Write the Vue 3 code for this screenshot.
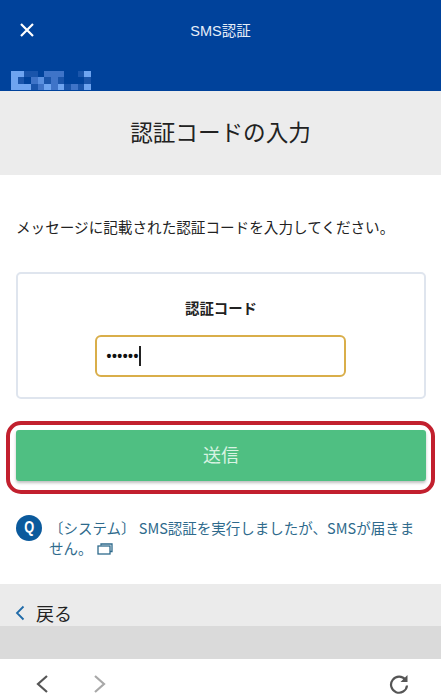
<script setup>
// pixelated account name in the header, 12 x 3 cells
const L = '#6ea4f0'
const M = '#3f74c8'
const D = '#1a55ab'
const B = '#00429b'
const mosaic = [
  L, L, D, D, B, M, M, M, B, B, D, L,
  L, D, B, M, '#5a90e0', D, M, D, B, B, B, D,
  L, L, L, D, M, L, M, L, D, M, D, L,
]
</script>

<template>
  <div class="page">
    <header class="top">
      <div class="top-row">
        <svg class="close" width="16" height="16" viewBox="0 0 16 16">
          <path d="M2 2 14 14M14 2 2 14" stroke="#fff" stroke-width="2.2" fill="none" />
        </svg>
        <span class="top-title">SMS認証</span>
      </div>
      <div class="mosaic">
        <i v-for="(c, i) in mosaic" :key="i" :style="{ background: c }"></i>
      </div>
    </header>

    <div class="title-band">
      <h1>認証コードの入力</h1>
    </div>

    <main class="content">
      <p class="lead">メッセージに記載された認証コードを入力してください。</p>

      <section class="card">
        <div class="label">認証コード</div>
        <div class="input">
          <span class="dots">••••••</span><span class="caret"></span>
        </div>
      </section>

      <div class="highlight">
        <button class="send">送信</button>
      </div>

      <div class="faq">
        <span class="q"><b>Q</b></span>
        <p>〔システム〕 SMS認証を実行しましたが、SMSが届きません。<svg class="ext" width="16" height="12" viewBox="0 0 16 12">
            <path d="M4 2.5V1h11v7.5h-2" fill="none" stroke="#2e6a8c" stroke-width="1.3" />
            <rect x="1" y="3" width="12" height="8" fill="none" stroke="#2e6a8c" stroke-width="1.3" />
          </svg>
        </p>
      </div>
    </main>

    <div class="back-band">
      <svg width="10" height="16" viewBox="0 0 10 16">
        <path d="M8.5 1.5 2 8l6.5 6.5" fill="none" stroke="#1f6aa8" stroke-width="1.8" />
      </svg>
      <span>戻る</span>
    </div>

    <div class="gray-band"></div>

    <nav class="toolbar">
      <svg width="14" height="20" viewBox="0 0 14 20">
        <path d="M12 2 3 10l9 8" fill="none" stroke="#555" stroke-width="2.2" />
      </svg>
      <svg class="forward" width="14" height="20" viewBox="0 0 14 20">
        <path d="M2 2l9 8-9 8" fill="none" stroke="#a8a8a8" stroke-width="2.2" />
      </svg>
      <svg class="reload" width="20" height="20" viewBox="0 0 20 20">
        <path d="M16.5 6A8 8 0 1 0 18 11.5" fill="none" stroke="#555" stroke-width="2.2" />
        <path d="M18.5 1v7h-7z" fill="#555" />
      </svg>
    </nav>
  </div>
</template>

<style scoped>
.page {
  width: 441px;
  height: 700px;
  overflow: hidden;
  display: flex;
  flex-direction: column;
  background: #fff;
  font-family: "Noto Sans CJK JP", "Liberation Sans", sans-serif;
  color: #222;
}

.top {
  height: 91px;
  flex: none;
  background: #00429b;
  display: flex;
  flex-direction: column;
}

.top-row {
  position: relative;
  height: 71px;
  display: flex;
  align-items: center;
  justify-content: center;
  padding-bottom: 10px;
  box-sizing: border-box;
}

.close {
  position: absolute;
  left: 19px;
  top: 22px;
}

.top-title {
  color: #e6eef8;
  font-family: "Liberation Sans", "Noto Sans CJK JP", sans-serif;
  font-size: 14.5px;
  line-height: 20px;
}

.mosaic {
  margin-left: 11px;
  width: 80px;
  height: 19px;
  display: grid;
  grid-template-columns: repeat(12, 1fr);
  grid-template-rows: repeat(3, 1fr);
}

.mosaic i {
  display: block;
}

.title-band {
  height: 84px;
  flex: none;
  background: #ececec;
  display: flex;
  align-items: center;
  justify-content: center;
  padding-bottom: 2px;
  box-sizing: border-box;
}

h1 {
  margin: 0;
  font-size: 22.6px;
  font-weight: 400;
  line-height: 32px;
  color: #222;
}

.content {
  flex: 1;
  padding: 41px 15px 0 16px;
  box-sizing: border-box;
}

.lead {
  margin: 0;
  font-size: 14.6px;
  line-height: 22px;
  color: #222;
}

.card {
  margin-top: 34px;
  height: 127px;
  box-sizing: border-box;
  border: 2px solid #dfe5ee;
  border-radius: 5px;
  display: flex;
  flex-direction: column;
  align-items: center;
  padding-top: 24px;
}

.label {
  font-size: 14.4px;
  font-weight: 700;
  line-height: 20px;
  color: #222;
}

.input {
  margin-top: 17px;
  margin-left: -2px;
  width: 251px;
  height: 42px;
  box-sizing: border-box;
  border: 2px solid #d9ae4a;
  border-radius: 6px;
  display: flex;
  align-items: center;
  padding-left: 10px;
}

.dots {
  font-family: "Liberation Sans", sans-serif;
  font-size: 14px;
  font-weight: 700;
  letter-spacing: .5px;
  color: #111;
}

.caret {
  width: 2px;
  height: 20px;
  background: #222;
}

.highlight {
  margin: 22px -9px 0 -10px;
  height: 73px;
  box-sizing: border-box;
  border: 4px solid #c2202e;
  border-radius: 15px;
  padding: 5px 5px 0 6px;
}

.send {
  display: block;
  width: 100%;
  height: 51px;
  border: 0;
  border-radius: 3px;
  background: #4fbf82;
  box-shadow: 0 2px 3px rgba(0, 0, 0, .25);
  color: #d8f3e3;
  font: inherit;
  font-size: 18px;
  padding-bottom: 4px;
}

.faq {
  margin-top: 21px;
  display: flex;
  align-items: flex-start;
  gap: 7px;
}

.q {
  flex: none;
  width: 26px;
  height: 26px;
  border-radius: 50%;
  background: #0b5a9c;
  color: #fff;
  display: flex;
  align-items: center;
  justify-content: center;
  font-family: "Liberation Sans", sans-serif;
  font-size: 16px;
}

.q b {
  transform: scaleX(.8);
}

.faq p {
  margin: 3px 0 0;
  font-size: 14.5px;
  line-height: 20px;
  color: #2e6a8c;
}

.ext {
  margin-left: 4px;
  vertical-align: -1px;
}

.back-band {
  height: 42px;
  flex: none;
  background: #ebebeb;
  display: flex;
  align-items: flex-end;
  gap: 11px;
  padding-left: 15px;
  box-sizing: border-box;
  color: #222;
  font-size: 18px;
  line-height: 26px;
}

.back-band svg {
  margin-bottom: 5px;
}

.gray-band {
  height: 33px;
  flex: none;
  background: #dadada;
}

.toolbar {
  height: 41px;
  flex: none;
  background: #fff;
  display: flex;
  align-items: center;
  padding-left: 35px;
  padding-top: 8px;
  box-sizing: border-box;
}

.forward {
  margin-left: 44px;
}

.reload {
  margin-left: auto;
  margin-right: 32px;
}
</style>
